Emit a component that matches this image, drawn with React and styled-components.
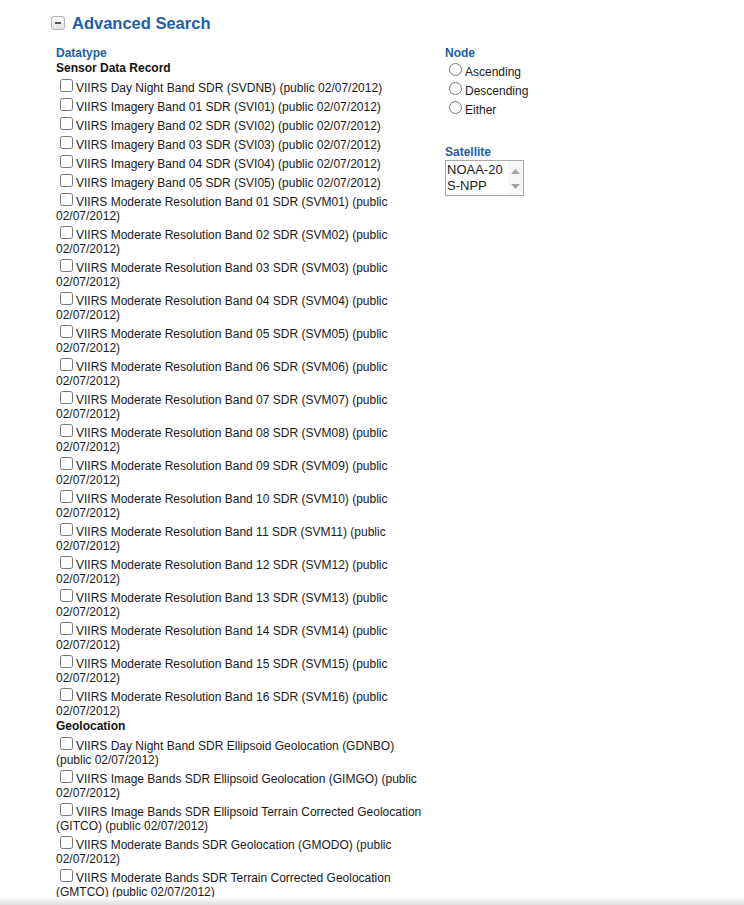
import styled, { createGlobalStyle } from "styled-components";

const GlobalStyle = createGlobalStyle`
  body {
    margin: 0;
    background: #fff;
    font-family: "Liberation Sans", Arial, sans-serif;
    font-size: 12px;
    color: #1a1a1a;
  }
`;

const sdr = [
  "VIIRS Day Night Band SDR (SVDNB)",
  ...[1, 2, 3, 4, 5].map((n) => `VIIRS Imagery Band 0${n} SDR (SVI0${n})`),
  ...Array.from({ length: 16 }, (_, i) => {
    const n = String(i + 1).padStart(2, "0");
    return `VIIRS Moderate Resolution Band ${n} SDR (SVM${n})`;
  }),
];

const geo = [
  "VIIRS Day Night Band SDR Ellipsoid Geolocation (GDNBO)",
  "VIIRS Image Bands SDR Ellipsoid Geolocation (GIMGO)",
  "VIIRS Image Bands SDR Ellipsoid Terrain Corrected Geolocation (GITCO)",
  "VIIRS Moderate Bands SDR Geolocation (GMODO)",
  "VIIRS Moderate Bands SDR Terrain Corrected Geolocation (GMTCO)",
];

const Arrow = ({ up }) => (
  <svg width="9" height="5" viewBox="0 0 9 5">
    <path d={up ? "M0 5 L4.5 0 L9 5 Z" : "M0 0 L4.5 5 L9 0 Z"} fill="#a3a3a3" />
  </svg>
);

const App = () => {
  return (
    <Page>
      <GlobalStyle />
      <Header>
        <Toggle aria-label="collapse" />
        <h2>Advanced Search</h2>
      </Header>
      <Columns>
        <LeftColumn>
          <FieldLabel>Datatype</FieldLabel>
          <Group>Sensor Data Record</Group>
          {sdr.map((name) => (
            <Option key={name}>
              <input type="checkbox" />
              {name} (public 02/07/2012)
            </Option>
          ))}
          <Group>Geolocation</Group>
          {geo.map((name) => (
            <Option key={name}>
              <input type="checkbox" />
              {name} (public 02/07/2012)
            </Option>
          ))}
        </LeftColumn>
        <RightColumn>
          <FieldLabel>Node</FieldLabel>
          {["Ascending", "Descending", "Either"].map((n) => (
            <Option key={n}>
              <input type="radio" name="node" />
              {n}
            </Option>
          ))}
          <FieldLabel $spaced>Satellite</FieldLabel>
          <ListBox role="listbox">
            <Items>
              <div>NOAA-20</div>
              <div>S-NPP</div>
            </Items>
            <ScrollBar>
              <Arrow up />
              <Arrow />
            </ScrollBar>
          </ListBox>
        </RightColumn>
      </Columns>
      <BottomShade />
    </Page>
  );
};

const Page = styled.div`
  padding-top: 13px;
`;

const Header = styled.div`
  display: flex;
  align-items: center;
  gap: 7px;
  margin-left: 51px;
  height: 20px;

  h2 {
    margin: 0;
    font-size: 16.5px;
    font-weight: bold;
    color: #1d5ea6;
    line-height: 20px;
  }
`;

const Toggle = styled.span`
  position: relative;
  width: 12px;
  height: 12px;
  border: 1px solid #b4b4b4;
  border-radius: 3px;
  background: linear-gradient(#fafafa, #e2e2e2);

  &::after {
    content: "";
    position: absolute;
    left: 3px;
    top: 5px;
    width: 6px;
    height: 2px;
    background: #555;
  }
`;

const Columns = styled.div`
  display: flex;
  margin: 13px 0 0 56px;
`;

const LeftColumn = styled.div`
  width: 375px;
  margin-right: 14px;
`;

const RightColumn = styled.div`
  display: flex;
  flex-direction: column;
  align-items: flex-start;
`;

const FieldLabel = styled.div`
  color: #1d5ea6;
  font-weight: bold;
  line-height: 14px;
  margin-top: ${(p) => (p.$spaced ? "28px" : "0")};
`;

const Group = styled.div`
  font-weight: bold;
  line-height: 16px;
  color: #111;
`;

const Option = styled.label`
  display: block;
  line-height: 14px;

  input {
    margin: 3px 3px 3px 4px;
  }
`;

const ListBox = styled.div`
  display: flex;
  margin-top: 1px;
  width: 77px;
  height: 34px;
  border: 1px solid #a9a9a9;
  background: #fff;
`;

const Items = styled.div`
  flex: 1;
  font-size: 13px;
  line-height: 16px;
  padding: 1px 0 0 1px;
  color: #1a1a1a;
`;

const ScrollBar = styled.div`
  width: 15px;
  display: flex;
  flex-direction: column;
  justify-content: space-between;
  align-items: center;
  padding: 8px 0 6px;
  background: #f7f7f7;
`;

const BottomShade = styled.div`
  position: fixed;
  left: 0;
  right: 0;
  bottom: 0;
  height: 8px;
  background: linear-gradient(#fff, #dedede);
`;

export default App;
